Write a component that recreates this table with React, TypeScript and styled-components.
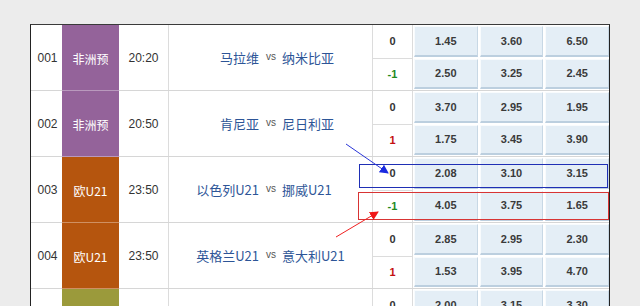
import React from "react";
import styled, { createGlobalStyle } from "styled-components";

const GlobalStyle = createGlobalStyle`
  html, body {
    margin: 0;
    padding: 0;
    background: #ececec;
    overflow: hidden;
  }
  body {
    font-family: "Liberation Sans", Arial, "Noto Sans CJK SC", sans-serif;
  }
`;

type Match = {
  no: string;
  league: string;
  color: string;
  time: string;
  home: string;
  away: string;
  lines: { hc: string; odds: string[] }[];
};

const matches: Match[] = [
  {
    no: "001",
    league: "非洲预",
    color: "#94639a",
    time: "20:20",
    home: "马拉维",
    away: "纳米比亚",
    lines: [
      { hc: "0", odds: ["1.45", "3.60", "6.50"] },
      { hc: "-1", odds: ["2.50", "3.25", "2.45"] },
    ],
  },
  {
    no: "002",
    league: "非洲预",
    color: "#94639a",
    time: "20:50",
    home: "肯尼亚",
    away: "尼日利亚",
    lines: [
      { hc: "0", odds: ["3.70", "2.95", "1.95"] },
      { hc: "1", odds: ["1.75", "3.45", "3.90"] },
    ],
  },
  {
    no: "003",
    league: "欧U21",
    color: "#b5550e",
    time: "23:50",
    home: "以色列U21",
    away: "挪威U21",
    lines: [
      { hc: "0", odds: ["2.08", "3.10", "3.15"] },
      { hc: "-1", odds: ["4.05", "3.75", "1.65"] },
    ],
  },
  {
    no: "004",
    league: "欧U21",
    color: "#b5550e",
    time: "23:50",
    home: "英格兰U21",
    away: "意大利U21",
    lines: [
      { hc: "0", odds: ["2.85", "2.95", "2.30"] },
      { hc: "1", odds: ["1.53", "3.95", "4.70"] },
    ],
  },
  {
    no: "005",
    league: "亚冠",
    color: "#9b9a3b",
    time: "23:55",
    home: "阿尔艾因",
    away: "萨德",
    lines: [
      { hc: "0", odds: ["2.00", "3.15", "3.30"] },
      { hc: "-1", odds: ["4.20", "3.70", "1.62"] },
    ],
  },
];

const Page = styled.div`
  padding: 24px 0 0 30px;
`;

const Table = styled.div`
  position: relative;
  width: 580px;
  border-top: 1px solid #3a3a3a;
  border-left: 1px solid #222;
  border-right: 1px solid #222;
  background: #fff;
  box-sizing: border-box;
`;

const Row = styled.div`
  display: grid;
  grid-template-columns: 31px 57px 50px 204px 40px 1fr;
  height: 66px;
  border-bottom: 1px solid #d6d6d6;
  box-sizing: border-box;
`;

const Cell = styled.div`
  display: flex;
  align-items: center;
  justify-content: center;
  font-size: 12px;
  color: #333;
  border-right: 1px solid #dcdcdc;
`;

const NoCell = styled(Cell)`
  border-right: none;
  padding-left: 2px;
`;

const Badge = styled(Cell)<{ $bg: string }>`
  background: ${(p) => p.$bg};
  color: #fff;
  font-family: "Noto Sans CJK SC", "Liberation Sans", sans-serif;
  font-size: 12px;
  border-right: none;
  box-shadow: inset 0 -1px 0 rgba(255, 255, 255, 0.35);
  margin-bottom: -1px;
`;

const Teams = styled.div`
  display: grid;
  grid-template-columns: 1fr auto 1fr;
  align-items: center;
  border-right: 1px solid #dcdcdc;
  font-family: "Noto Sans CJK SC", "Liberation Sans", sans-serif;
  font-size: 13px;
  color: #2d5597;
  white-space: nowrap;
`;

const Home = styled.span`
  justify-self: end;
`;

const Away = styled.span`
  justify-self: start;
`;

const Vs = styled.span`
  font-family: "Liberation Sans", Arial, sans-serif;
  font-size: 10px;
  color: #555;
  margin: 0 6px 0 7px;
  position: relative;
  top: -1px;
`;

const HcCol = styled.div`
  display: grid;
  grid-template-rows: 1fr 1fr;
  border-right: 1px solid #dcdcdc;
`;

const Hc = styled.div<{ $tone: "even" | "minus" | "plus" }>`
  display: flex;
  align-items: center;
  justify-content: center;
  font-size: 11px;
  font-weight: bold;
  color: ${(p) =>
    p.$tone === "minus" ? "#1f8a1f" : p.$tone === "plus" ? "#c41010" : "#333"};
  & + & {
    border-top: 1px solid #dcdcdc;
  }
`;

const OddsCol = styled.div`
  display: grid;
  grid-template-rows: 1fr 1fr;
`;

const OddsRow = styled.div`
  display: grid;
  grid-template-columns: 1fr 1fr 1fr;
  column-gap: 2px;
  padding: 1px 0 1px 1px;
`;

const Odd = styled.div`
  display: flex;
  align-items: center;
  justify-content: center;
  background: #e4eef6;
  border-top: 1px solid #f8fbfd;
  border-left: 1px solid #f8fbfd;
  border-right: 1px solid #c8d8e5;
  border-bottom: 2px solid #bccfdf;
  font-size: 11px;
  font-weight: bold;
  color: #3a3a3a;
`;

const Mark = styled.div<{ $c: string; $l: number; $t: number; $w: number; $h: number }>`
  position: absolute;
  left: ${(p) => p.$l}px;
  top: ${(p) => p.$t}px;
  width: ${(p) => p.$w}px;
  height: ${(p) => p.$h}px;
  border: 1px solid ${(p) => p.$c};
  box-sizing: border-box;
  pointer-events: none;
`;

const Arrows = styled.svg`
  position: absolute;
  left: 0;
  top: 0;
  overflow: visible;
  pointer-events: none;
`;

const toneOf = (hc: string) => (hc === "0" ? "even" : hc.startsWith("-") ? "minus" : "plus");

export default function App() {
  return (
    <>
      <GlobalStyle />
      <Page>
        <Table>
          {matches.map((m) => (
            <Row key={m.no}>
              <NoCell>{m.no}</NoCell>
              <Badge $bg={m.color}>{m.league}</Badge>
              <Cell>{m.time}</Cell>
              <Teams>
                <Home>{m.home}</Home>
                <Vs>vs</Vs>
                <Away>{m.away}</Away>
              </Teams>
              <HcCol>
                {m.lines.map((l, i) => (
                  <Hc key={i} $tone={toneOf(l.hc)}>
                    {l.hc}
                  </Hc>
                ))}
              </HcCol>
              <OddsCol>
                {m.lines.map((l, i) => (
                  <OddsRow key={i}>
                    {l.odds.map((o, j) => (
                      <Odd key={j}>{o}</Odd>
                    ))}
                  </OddsRow>
                ))}
              </OddsCol>
            </Row>
          ))}
          <Mark $c="#1f2fb5" $l={328} $t={139} $w={249} $h={24} />
          <Mark $c="#d83434" $l={327} $t={167} $w={251} $h={28} />
          <Arrows width="580" height="300">
            <defs>
              <marker id="hb" markerWidth="9" markerHeight="9" refX="8" refY="4.5" orient="auto">
                <path d="M0,0 L9,4.5 L0,9 Z" fill="#1a2ae0" />
              </marker>
              <marker id="hr" markerWidth="9" markerHeight="9" refX="8" refY="4.5" orient="auto">
                <path d="M0,0 L9,4.5 L0,9 Z" fill="#f01818" />
              </marker>
            </defs>
            <line x1="315" y1="119" x2="357" y2="148" stroke="#2a36d8" strokeWidth="1" markerEnd="url(#hb)" />
            <line x1="305" y1="212" x2="347" y2="187" stroke="#f02020" strokeWidth="1" markerEnd="url(#hr)" />
          </Arrows>
        </Table>
      </Page>
    </>
  );
}
